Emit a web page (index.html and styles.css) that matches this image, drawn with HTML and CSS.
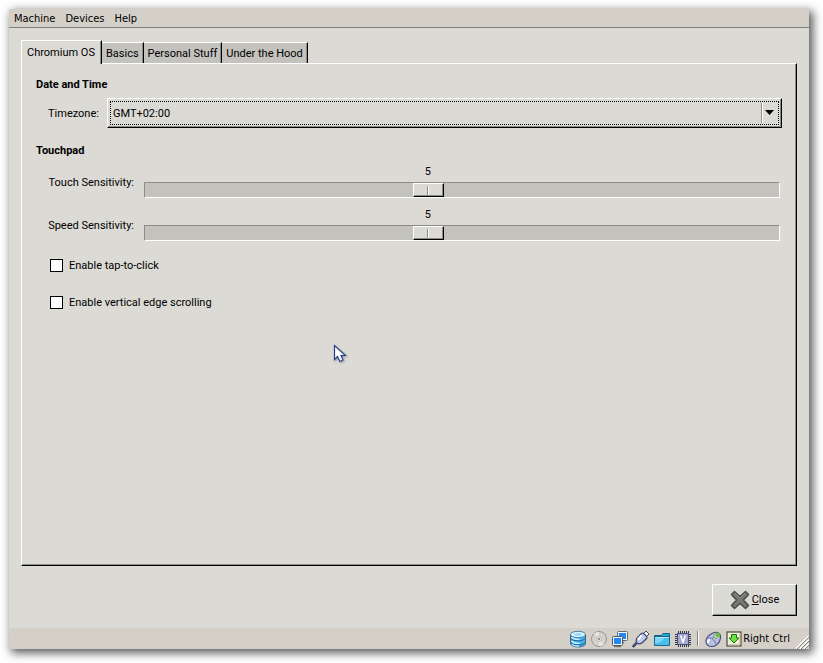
FILE: index.html
```html
<!DOCTYPE html>
<html lang="en">
<head>
    <meta charset="UTF-8">
    <meta name="viewport" content="width=device-width, initial-scale=1.0">
    <title>Chromium OS Options</title>
    <link rel="stylesheet" href="styles.css">
</head>
<body>
    <div class="window">
        <nav class="menubar">
            <button type="button">Machine</button>
            <button type="button">Devices</button>
            <button type="button">Help</button>
        </nav>

        <main class="dialog">
            <div class="tabs" role="tablist">
                <button type="button" class="tab active" role="tab" aria-selected="true">Chromium OS</button>
                <button type="button" class="tab" role="tab">Basics</button>
                <button type="button" class="tab" role="tab">Personal Stuff</button>
                <button type="button" class="tab" role="tab">Under the Hood</button>
            </div>

            <section class="panel" role="tabpanel">
                <h2>Date and Time</h2>
                <div class="timezone-row">
                    <label for="timezone">Timezone:</label>
                    <div class="combo">
                        <select id="timezone">
                            <option>GMT+02:00</option>
                        </select>
                        <svg class="combo-arrow" width="9" height="5" viewBox="0 0 9 5"><path d="M0 0h9L4.500 5z"/></svg>
                    </div>
                </div>

                <h2>Touchpad</h2>
                <div class="slider-row">
                    <label for="touch">Touch Sensitivity:</label>
                    <div class="slider" style="--pos: 4">
                        <output for="touch">5</output>
                        <input type="range" id="touch" min="1" max="10" value="5">
                    </div>
                </div>
                <div class="slider-row">
                    <label for="speed">Speed Sensitivity:</label>
                    <div class="slider" style="--pos: 4">
                        <output for="speed">5</output>
                        <input type="range" id="speed" min="1" max="10" value="5">
                    </div>
                </div>

                <label class="check"><input type="checkbox">Enable tap-to-click</label>
                <label class="check"><input type="checkbox">Enable vertical edge scrolling</label>
            </section>

            <div class="actions">
                <button type="button" class="close">
                    <svg width="20" height="20" viewBox="0 0 20 20">
                        <path d="M4.500 1.500 10 6.500 15.500 1.500 18.500 4.500 13.500 10 18.500 15.500 15.500 18.500 10 13.500 4.500 18.500 1.500 15.500 6.500 10 1.500 4.500z" fill="#757773" stroke="#4b4d49" stroke-width="1.500" stroke-linejoin="round"/>
                        <path d="M4.500 3 10 8l5.500-5" fill="none" stroke="#92948f"/>
                    </svg>
                    <span><u>C</u>lose</span>
                </button>
            </div>
        </main>

        <footer class="statusbar">
            <!-- hard disk -->
            <svg width="18" height="18" viewBox="0 0 18 18">
                <path d="M1.500 4.500v9c0 1.800 3.400 3.500 7.500 3.500s7.500-1.700 7.500-3.500v-9z" fill="#45b4f0" stroke="#3a6485"/>
                <path d="M2 8.500c2 3.200 12 3.200 14 0M2 12.500c2 3.200 12 3.200 14 0" fill="none" stroke="#1c639a"/>
                <path d="M2.500 7c2 2.300 5 2.500 8 2.300M2.500 11c2 2.300 5 2.500 8 2.300M3 14.500c2 1.500 5 1.800 7 1.500" fill="none" stroke="#c9efff" stroke-width="1.400"/>
                <ellipse cx="9" cy="4.500" rx="7.500" ry="3.200" fill="#d4f3ff" stroke="#4a7fa3"/>
                <ellipse cx="9" cy="4.500" rx="3.500" ry="1.200" fill="#8fd5f7"/>
            </svg>
            <!-- optical disc -->
            <svg width="18" height="18" viewBox="0 0 18 18">
                <circle cx="9" cy="9" r="7.500" fill="#d3d2cf" stroke="#96948f"/>
                <path d="M9 9 4 3.500A7 7 0 0 1 9 2zM9 9l5 5.500A7 7 0 0 1 9 16z" fill="#e6e5e2"/>
                <circle cx="9" cy="9" r="2.500" fill="#e7e6e3" stroke="#bbb9b4"/>
                <circle cx="9" cy="9" r="1" fill="#77756f"/>
            </svg>
            <!-- network -->
            <svg width="18" height="18" viewBox="0 0 18 18">
                <path d="M12 11.500v2M3 16.500h7" stroke="#777" stroke-width="1.500"/>
                <rect x="6.500" y="1.500" width="10" height="9" rx="1" fill="#f7f7f7" stroke="#616b78"/>
                <rect x="8" y="3" width="7" height="6" fill="#2288f3"/>
                <rect x="1.500" y="6.500" width="10" height="9" rx="1" fill="#f7f7f7" stroke="#4b5664"/>
                <rect x="3" y="8" width="7" height="6" fill="#2288f3"/>
            </svg>
            <!-- usb -->
            <svg width="18" height="18" viewBox="0 0 18 18">
                <path d="m11.500 3.500 2.500-2.500 3 3-2.500 2.500z" fill="#fff" stroke="#42496d"/>
                <path d="M9.500 3.500c.7-.7 1.500-.7 2.200 0l2.800 2.800c.7.700.7 1.500 0 2.200l-4 4c-1.500 1.300-3.500 1.500-5 .8L1.500 17l-.8-.8L4.500 12c-.5-1.500-.3-3 .8-4.300z" fill="#c3cbee" stroke="#39426f" stroke-width="1.200"/>
                <path d="m9.500 5.500-3.500 4" stroke="#fff" stroke-width="2"/>
            </svg>
            <!-- shared folders -->
            <svg width="18" height="18" viewBox="0 0 18 18">
                <path d="M1.500 14.500v-9h7l1.500-2h6.500v11z" fill="#28a4da" stroke="#136386"/>
                <path d="M1.500 15.500v-9h15v9z" fill="#4dbcec" stroke="#17698d"/>
                <path d="M2.500 7.500h13" stroke="#a9e5fc"/>
                <path d="M2 8h9c-1 4-5 5-9 5.500z" fill="#7bd5f8"/>
            </svg>
            <!-- virtualization -->
            <svg width="18" height="18" viewBox="0 0 18 18">
                <path d="M4 2h11M4 16h11M2 4v11M16 4v11" stroke="#30364d" stroke-width="2" stroke-dasharray="1 1"/>
                <rect x="3.500" y="3.500" width="11" height="11" fill="#a3a9d4" stroke="#4a5175"/>
                <path d="M6.500 5.500 9 12l2.500-6.500" fill="none" stroke="#fff" stroke-width="1.500"/>
            </svg>
            <span class="separator"></span>
            <!-- mouse -->
            <svg width="18" height="18" viewBox="0 0 18 18">
                <path d="M9 3c4-2 8 .5 7.500 5C16 13 12 16.500 8 16.500S1.500 14 2 10.500 5.500 4.500 9 3z" fill="#b9c0e4" stroke="#454e7c" stroke-width="1.200"/>
                <path d="M3.500 8c3-1 7.500 1.500 8.500 6.500M8 9l3-4" fill="none" stroke="#6a73a0"/>
                <path d="M4 13c-.3-2 .7-3 2-3" fill="none" stroke="#fff" stroke-width="2"/>
                <path d="m9.500 6 2.500 3 4-5-2.500-1.500z" fill="#dff5c8" stroke="#587a3c" stroke-width=".7"/>
                <circle cx="13.500" cy="5" r="2.200" fill="#66c23a"/>
            </svg>
            <span class="host-key">
                <svg width="18" height="18" viewBox="0 0 18 18">
                    <rect x="2" y="2" width="14" height="14" fill="#f1eed9" stroke="#55534a" stroke-width="1.300"/>
                    <path d="M3.500 15h11.500v-11.500" fill="none" stroke="#b4ae8b"/>
                    <path d="M6.500 4.500h5V8h2.500L9 13 4 8h2.500z" fill="#6be043" stroke="#18760d"/>
                </svg>
                Right Ctrl
            </span>
            <svg class="grip" width="13" height="13" viewBox="0 0 13 13">
                <path d="M0 13 13 0M4 13l9-9M8 13l5-5" stroke="#fff" stroke-width="2"/>
                <path d="M1 13 13 1M5 13l8-8M9 13l4-4" stroke="#817d76"/>
            </svg>
        </footer>

        <svg class="cursor" width="14" height="20" viewBox="0 0 14 20">
            <path d="M1.500 1.500v14l3-3 2.500 5 3-1.500-2-4.500h4.500z" fill="#fff" stroke="#243f8f" stroke-width="1.200"/>
        </svg>
    </div>
</body>
</html>
```
FILE: styles.css
```css
:root {
    --face: #dcdad5;
    --frame: #d4d0c8;
    --trough: #c4c2bd;
    --shade: #8e8c87;
}

* {
    box-sizing: border-box;
    margin: 0;
    padding: 0;
}

body {
    min-height: 100vh;
    padding: 9px 14px 14px 9px;
    display: flex;
    background: #fff;
    color: #000;
    font-family: Roboto, "Noto Sans", sans-serif;
    font-size: 11px;
    line-height: 16px;
}

button,
select {
    font: inherit;
    color: inherit;
    background: none;
    border: none;
    border-radius: 0;
}

.window {
    position: relative;
    flex: 1;
    display: flex;
    flex-direction: column;
    background: var(--face);
    box-shadow: 3px 3px 9px 1px rgba(0, 0, 0, 0.65);
}

.menubar {
    height: 19px;
    padding: 2px 5px 0;
    display: flex;
    gap: 10px;
    background: var(--frame);
    border-bottom: 1px solid #808080;
    font-family: "DejaVu Sans Condensed", "DejaVu Sans", sans-serif;
}

.dialog {
    flex: 1;
    display: flex;
    flex-direction: column;
    padding: 12px;
}

/* tabs */
.tabs {
    display: flex;
    align-items: flex-end;
}

.tab {
    height: 21px;
    padding: 2px 4px 0;
    background: var(--trough);
    border-top: 1px solid #fff;
    border-right: 1px solid #000;
    box-shadow: inset -1px 0 var(--shade);
}

.tab.active {
    height: 24px;
    margin-bottom: -1px;
    padding: 0 6px 0 5px;
    background: var(--face);
    border-left: 1px solid #fff;
    z-index: 1;
}

.panel {
    flex: 1;
    padding: 12px 14px;
    border: 1px solid;
    border-color: #fff #000 #000 #fff;
    box-shadow: inset -1px -1px var(--shade);
}

.panel h2 {
    font-size: 11px;
    font-weight: bold;
    line-height: 18px;
}

.timezone-row {
    display: flex;
    align-items: center;
    gap: 8px;
    margin: 4px 0 14px;
    padding-left: 12px;
}

.timezone-row label {
    padding-top: 2px;
}

.combo {
    position: relative;
    flex: 1;
    border: 1px solid;
    border-color: #fff #000 #000 #fff;
    box-shadow: inset -1px -1px var(--shade);
}

.combo select {
    display: block;
    width: 100%;
    height: 28px;
    padding: 2px 0 0 5px;
    appearance: none;
    outline: 1px dotted #000;
    outline-offset: -3px;
}

.combo-arrow {
    position: absolute;
    top: 11px;
    right: 7px;
    pointer-events: none;
}

.combo::after {
    content: "";
    position: absolute;
    top: 4px;
    bottom: 4px;
    right: 18px;
    width: 2px;
    background: linear-gradient(to right, var(--shade) 1px, #fff 1px);
    pointer-events: none;
}

/* sliders */
.slider-row {
    display: flex;
    align-items: center;
    margin: 3px 2px 8px 0;
}

.slider-row + .slider-row {
    margin-top: 8px;
}

.slider-row label {
    width: 108px;
    padding: 4px 10px 0 0;
    text-align: right;
}

.slider {
    flex: 1;
}

.slider output {
    display: block;
    width: 30px;
    height: 19px;
    margin-left: calc((100% - 31px) * var(--pos) / 9);
    line-height: 18px;
    text-align: center;
}

.slider input {
    display: block;
    width: 100%;
    height: 16px;
    appearance: none;
    background: var(--trough);
    border: 1px solid;
    border-color: var(--shade) #fff #fff var(--shade);
}

.slider input::-webkit-slider-thumb {
    appearance: none;
    width: 31px;
    height: 14px;
    border: 1px solid;
    border-color: #fff #000 #000 #fff;
    background:
        linear-gradient(to right, var(--shade) 1px, #fff 1px) center / 2px 9px no-repeat,
        var(--face);
    box-shadow: inset -1px -1px var(--shade);
}

.check {
    display: flex;
    align-items: center;
    gap: 6px;
    width: fit-content;
    margin: 17px 0 21px 14px;
}

.check + .check {
    margin-top: 0;
}

.check input {
    appearance: none;
    width: 13px;
    height: 13px;
    margin-bottom: 2px;
    background: #fff;
    border: 1px solid #000;
}

.actions {
    display: flex;
    justify-content: flex-end;
    padding-top: 18px;
}

.close {
    display: flex;
    align-items: center;
    justify-content: center;
    gap: 2px;
    width: 85px;
    height: 32px;
    border: 1px solid;
    border-color: #fff #000 #000 #fff;
    box-shadow: inset -1px -1px var(--shade);
}

/* status bar */
.statusbar {
    height: 21px;
    display: flex;
    align-items: center;
    justify-content: flex-end;
    gap: 3px;
    background: var(--frame);
    font-family: "DejaVu Sans Condensed", "DejaVu Sans", sans-serif;
}

.separator {
    width: 2px;
    height: 15px;
    margin: 0 2px;
    background: linear-gradient(to right, #808080 1px, #fff 1px);
}

.host-key {
    display: flex;
    align-items: center;
    margin-right: 3px;
}

.grip {
    align-self: flex-end;
}

/* mouse pointer floating above the dialog */
.cursor {
    position: absolute;
    left: 324px;
    top: 335px;
    filter: drop-shadow(1px 1px 1px rgba(0, 0, 0, 0.3));
}
```
